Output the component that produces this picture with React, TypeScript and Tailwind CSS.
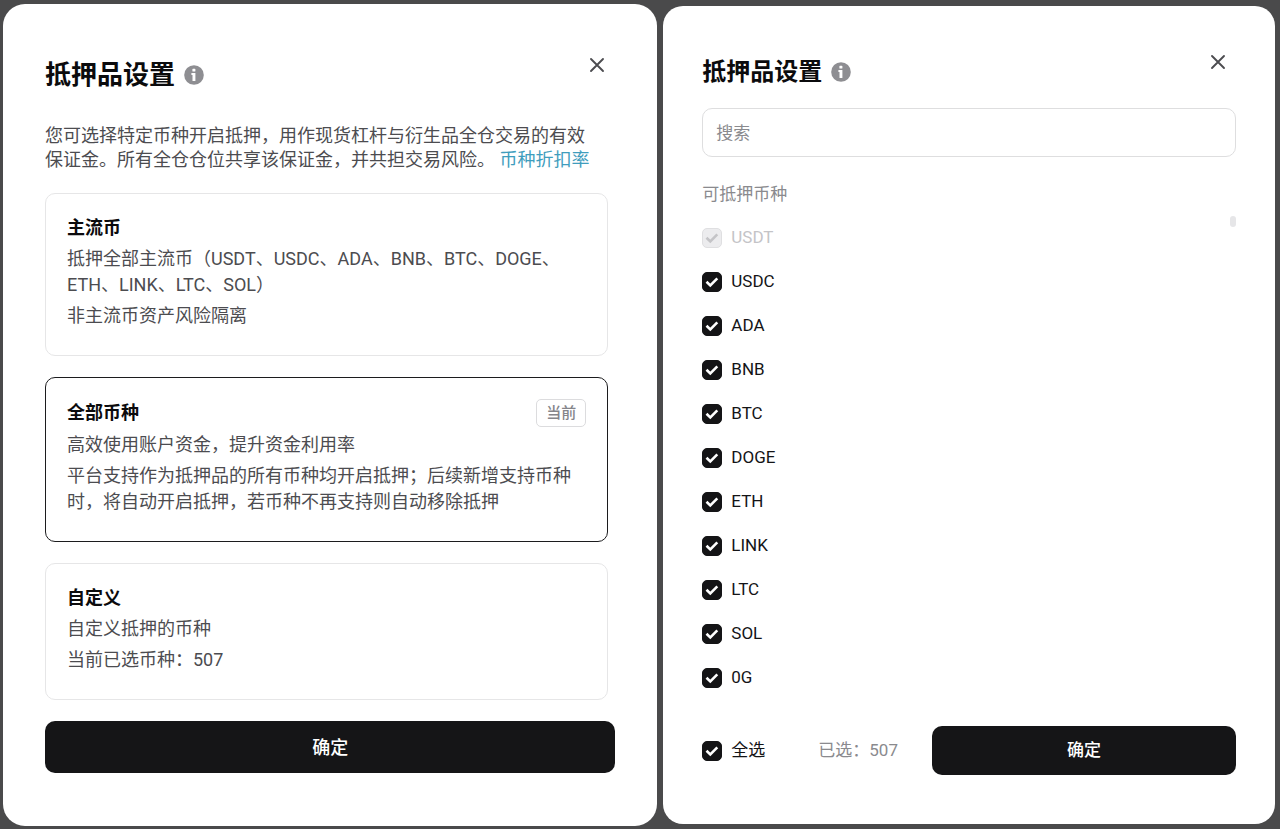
import { useState, type ReactNode } from "react";

const coins = ["USDT", "USDC", "ADA", "BNB", "BTC", "DOGE", "ETH", "LINK", "LTC", "SOL", "0G"];

function InfoIcon() {
  return (
    <svg viewBox="0 0 20 20" className="size-5" aria-hidden="true">
      <circle cx="10" cy="10" r="9.8" fill="#8e8e92" />
      <rect x="8.4" y="3.8" width="3" height="2.8" rx="0.6" fill="#fff" />
      <path d="M7.4 8h4v8H8.5V10H7.4z" fill="#fff" />
    </svg>
  );
}

function CloseButton() {
  return (
    <button type="button" aria-label="关闭" className="mr-[10px] size-4">
      <svg
        viewBox="0 0 16 16"
        className="size-4"
        fill="none"
        stroke="#4c4c50"
        strokeWidth="1.9"
        strokeLinecap="round"
        aria-hidden="true"
      >
        <path d="M2 2l12 12M14 2L2 14" />
      </svg>
    </button>
  );
}

function Option({
  title,
  current = false,
  selected,
  onSelect,
  children,
}: {
  title: string;
  current?: boolean;
  selected: boolean;
  onSelect: () => void;
  children: ReactNode;
}) {
  return (
    <button
      type="button"
      aria-pressed={selected}
      onClick={onSelect}
      className={`mr-[7px] flex flex-col gap-[5px] rounded-[10px] border px-[21px] pt-[21px] pb-[26px] text-left leading-[26px] text-[#4c4c50] ${
        selected ? "border-[#1c1c1e]" : "border-[#e6e6e7]"
      }`}
    >
      <span className="flex w-full items-center justify-between font-bold text-[#0b0b0d]">
        {title}
        {current && (
          <span className="rounded-[5px] border border-[#dcdcde] px-[9px] text-[15px] leading-[26px] font-medium text-[#85858a]">
            当前
          </span>
        )}
      </span>
      {children}
    </button>
  );
}

function Check({
  label,
  checked,
  disabled = false,
  onChange,
}: {
  label: string;
  checked: boolean;
  disabled?: boolean;
  onChange: () => void;
}) {
  return (
    <label className={`flex items-center gap-[9px] ${disabled ? "text-[#c4c4c7]" : "text-[#141416]"}`}>
      <span className="grid size-5 place-items-center">
        <input
          type="checkbox"
          checked={checked}
          disabled={disabled}
          onChange={onChange}
          className="col-start-1 row-start-1 size-5 appearance-none rounded-[5px] border border-[#c4c4c7] checked:border-[#141416] checked:bg-[#141416] disabled:border-[#dfdfe1] disabled:bg-[#ececee]"
        />
        {checked && (
          <svg
            viewBox="0 0 20 20"
            className="pointer-events-none col-start-1 row-start-1 size-5"
            fill="none"
            stroke={disabled ? "#c4c4c7" : "#fff"}
            strokeWidth="2.6"
            aria-hidden="true"
          >
            <path d="M4.5 9.7l3.8 3.7 7-7" />
          </svg>
        )}
      </span>
      <span>{label}</span>
    </label>
  );
}

export default function App() {
  const [mode, setMode] = useState("all");
  const [off, setOff] = useState<string[]>([]);
  const toggle = (coin: string) =>
    setOff((list) => (list.includes(coin) ? list.filter((c) => c !== coin) : [...list, coin]));

  return (
    <main className="flex min-h-screen gap-[6px] bg-[#4a4a4b] pt-1 pr-[5px] pb-[3px] pl-[3px] font-['Roboto','Noto_Sans_CJK_SC',sans-serif]">
      <section className="flex min-w-0 flex-[654] flex-col rounded-[22px] bg-white px-[42px] pt-[53px] pb-[53px] text-[18px]">
        <header className="flex items-start justify-between">
          <h1 className="flex items-center gap-[9px] text-[26px] leading-9 font-bold text-[#0b0b0d]">
            抵押品设置
            <InfoIcon />
          </h1>
          <CloseButton />
        </header>
        <p className="mt-[31px] pr-[20px] leading-6 text-[#4c4c50]">
          您可选择特定币种开启抵押，用作现货杠杆与衍生品全仓交易的有效保证金。所有全仓仓位共享该保证金，并共担交易风险。{" "}
          <a href="#rate" className="text-[#3f9dbd]">
            币种折扣率
          </a>
        </p>
        <div className="mt-[21px] flex flex-col gap-[21px]">
          <Option title="主流币" selected={mode === "main"} onSelect={() => setMode("main")}>
            <span>抵押全部主流币（USDT、USDC、ADA、BNB、BTC、DOGE、ETH、LINK、LTC、SOL）</span>
            <span>非主流币资产风险隔离</span>
          </Option>
          <Option title="全部币种" current selected={mode === "all"} onSelect={() => setMode("all")}>
            <span>高效使用账户资金，提升资金利用率</span>
            <span>平台支持作为抵押品的所有币种均开启抵押；后续新增支持币种时，将自动开启抵押，若币种不再支持则自动移除抵押</span>
          </Option>
          <Option title="自定义" selected={mode === "custom"} onSelect={() => setMode("custom")}>
            <span>自定义抵押的币种</span>
            <span>当前已选币种：507</span>
          </Option>
          <button type="button" className="h-[52px] rounded-[10px] bg-[#151517] font-medium text-white">
            确定
          </button>
        </div>
      </section>

      <section className="my-[2px] flex min-w-0 flex-[612] flex-col rounded-[20px] bg-white px-[39px] pt-12 pb-12 text-[17px]">
        <header className="flex items-start justify-between">
          <h1 className="flex items-center gap-[9px] text-[24px] leading-9 font-bold text-[#0b0b0d]">
            抵押品设置
            <InfoIcon />
          </h1>
          <CloseButton />
        </header>
        <input
          type="search"
          aria-label="搜索"
          placeholder="搜索"
          className="mt-[18px] h-[49px] w-full rounded-[10px] border border-[#dededf] px-[13px] outline-none placeholder:text-[#8a8a8e]"
        />
        <h2 className="mt-[25px] leading-6 text-[#8a8a8e]">可抵押币种</h2>
        <div className="mt-[10px] flex justify-between">
          <ul>
            {coins.map((coin) => (
              <li key={coin} className="flex h-11 items-center">
                <Check
                  label={coin}
                  checked={!off.includes(coin)}
                  disabled={coin === "USDT"}
                  onChange={() => toggle(coin)}
                />
              </li>
            ))}
          </ul>
          <span className="h-[11px] w-[6px] rounded-full bg-[#e6e6e8]" />
        </div>
        <footer className="mt-[26px] flex items-center">
          <Check
            label="全选"
            checked={off.length === 0}
            onChange={() => setOff(off.length ? [] : coins.slice(1))}
          />
          <span className="ml-[53px] text-[#8a8a8e]">已选：507</span>
          <button type="button" className="ml-auto h-[49px] w-[57%] rounded-[10px] bg-[#151517] font-medium text-white">
            确定
          </button>
        </footer>
      </section>
    </main>
  );
}
